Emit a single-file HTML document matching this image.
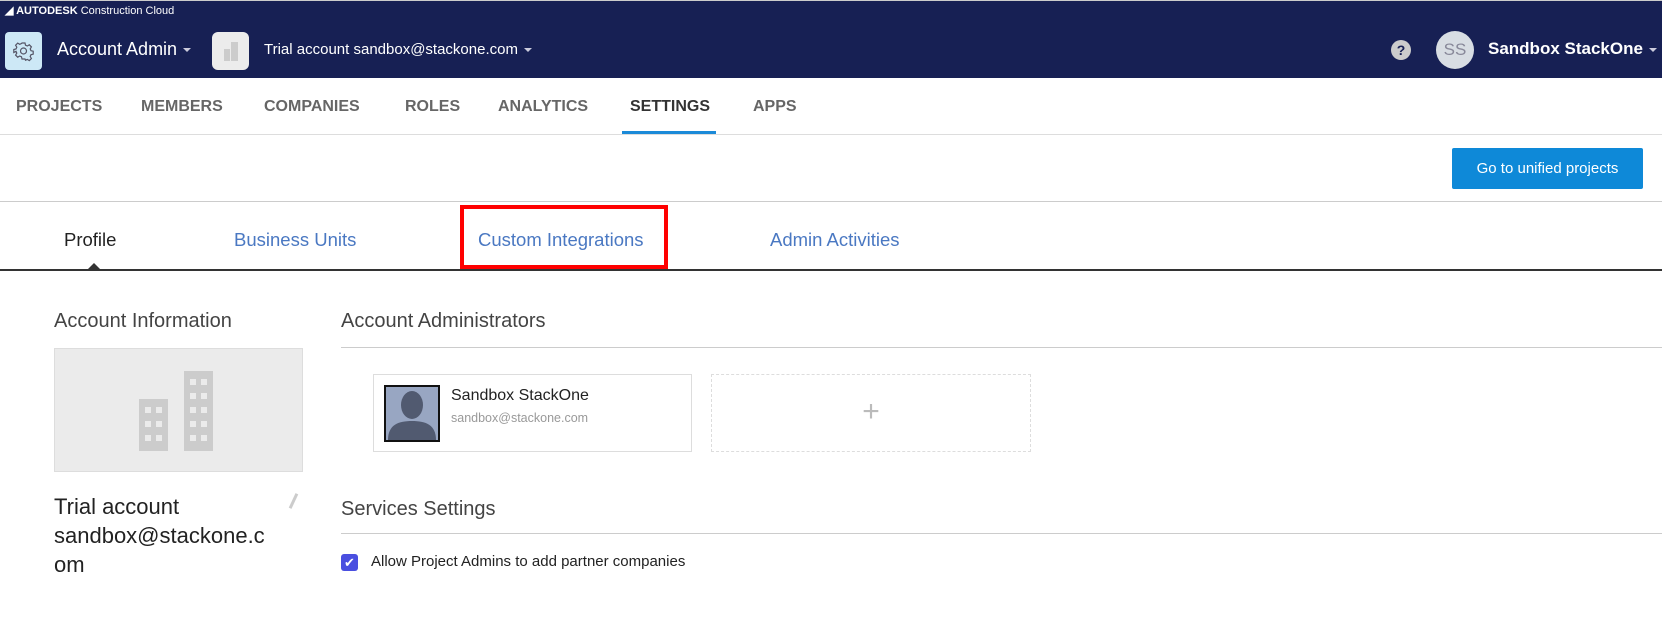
<!DOCTYPE html>
<html><head><meta charset="utf-8"><style>
*{margin:0;padding:0;box-sizing:border-box}
body{width:1662px;height:638px;background:#fff;font-family:"Liberation Sans",sans-serif;position:relative;overflow:hidden;color:#333}
.a{position:absolute;white-space:nowrap}
.nav{color:#555;font-size:16px;top:98px;letter-spacing:0;font-weight:bold;color:#666}
.tab{font-size:18.5px;top:229px;color:#4a78c2}
.caret{display:inline-block;width:0;height:0;border-left:4px solid transparent;border-right:4px solid transparent;border-top:4px solid #ccd;vertical-align:middle;margin-left:6px}
</style></head><body>
<div class="a" style="left:0;top:0;width:1662px;height:78px;background:#172054;border-top:1px solid #ccc"></div>
<div class="a" style="left:5px;top:4px;color:#fff;font-size:11px"><b>◢ AUTODESK</b> Construction Cloud</div>
<div class="a" style="left:5px;top:32px;width:37px;height:38px;background:#cde8f6;border-radius:4px">
<svg width="37" height="38" viewBox="0 0 37 38"><g fill="none" stroke="#556" stroke-width="1.2"><circle cx="18.5" cy="19" r="3"/><path d="M17 11h3l.5 2.2 1.8.8 2-1.2 2.1 2.1-1.2 2 .8 1.8 2.2.5v3l-2.2.5-.8 1.8 1.2 2-2.1 2.1-2-1.2-1.8.8L20 27h-3l-.5-2.2-1.8-.8-2 1.2-2.1-2.1 1.2-2-.8-1.8L8.8 20.5v-3l2.2-.5.8-1.8-1.2-2 2.1-2.1 2 1.2 1.8-.8z"/></g></svg></div>
<div class="a" style="left:57px;top:39px;color:#fff;font-size:18px">Account Admin<span class="caret"></span></div>
<div class="a" style="left:212px;top:32px;width:37px;height:38px;background:#ececec;border-radius:6px">
<svg width="37" height="38" viewBox="0 0 37 38"><rect x="12" y="17" width="6" height="12" fill="#ccc"/><rect x="19" y="10" width="7" height="19" fill="#ccc"/></svg></div>
<div class="a" style="left:264px;top:41px;color:#fff;font-size:15px">Trial account sandbox@stackone.com<span class="caret"></span></div>
<div class="a" style="left:1391px;top:40px;width:20px;height:20px;border-radius:50%;background:#ccc;color:#172054;font-weight:bold;font-size:14px;text-align:center;line-height:20px">?</div>
<div class="a" style="left:1436px;top:31px;width:38px;height:38px;border-radius:50%;background:#d8dde3;color:#889;font-size:17px;text-align:center;line-height:38px">SS</div>
<div class="a" style="left:1488px;top:39px;color:#fff;font-size:17px;font-weight:bold">Sandbox StackOne<span class="caret"></span></div>

<div class="a nav" style="left:16px">PROJECTS</div>
<div class="a nav" style="left:141px">MEMBERS</div>
<div class="a nav" style="left:264px">COMPANIES</div>
<div class="a nav" style="left:405px">ROLES</div>
<div class="a nav" style="left:498px">ANALYTICS</div>
<div class="a nav" style="left:630px;color:#333">SETTINGS</div>
<div class="a nav" style="left:753px">APPS</div>
<div class="a" style="left:622px;top:131px;width:94px;height:3px;background:#1b8ad8"></div>
<div class="a" style="left:0;top:134px;width:1662px;height:1px;background:#ddd"></div>

<div class="a" style="left:1452px;top:148px;width:191px;height:41px;background:#0e89d8;border-radius:2px;color:#fff;font-size:15px;text-align:center;line-height:41px">Go to unified projects</div>
<div class="a" style="left:0;top:201px;width:1662px;height:1px;background:#ccc"></div>

<div class="a tab" style="left:64px;color:#222">Profile</div>
<div class="a tab" style="left:234px">Business Units</div>
<div class="a tab" style="left:478px">Custom Integrations</div>
<div class="a tab" style="left:770px">Admin Activities</div>
<div class="a" style="left:460px;top:205px;width:208px;height:64px;border:4px solid #f00"></div>
<div class="a" style="left:0;top:269px;width:1662px;height:2px;background:#333"></div>
<div class="a" style="left:88px;top:263px;width:0;height:0;border-left:6px solid transparent;border-right:6px solid transparent;border-bottom:6px solid #333"></div>

<div class="a" style="left:54px;top:310px;font-size:20px;color:#444">Account Information</div>
<div class="a" style="left:54px;top:348px;width:249px;height:124px;background:#ebebeb;border:1px solid #ddd">
<svg width="249" height="124" viewBox="0 0 249 124"><rect x="84" y="50" width="29" height="52" fill="#ccc"/><rect x="129" y="22" width="29" height="80" fill="#ccc"/>
<g fill="#ebebeb"><rect x="90" y="58" width="6" height="6"/><rect x="101" y="58" width="6" height="6"/><rect x="90" y="72" width="6" height="6"/><rect x="101" y="72" width="6" height="6"/><rect x="90" y="86" width="6" height="6"/><rect x="101" y="86" width="6" height="6"/>
<rect x="135" y="30" width="6" height="6"/><rect x="146" y="30" width="6" height="6"/><rect x="135" y="44" width="6" height="6"/><rect x="146" y="44" width="6" height="6"/><rect x="135" y="58" width="6" height="6"/><rect x="146" y="58" width="6" height="6"/><rect x="135" y="72" width="6" height="6"/><rect x="146" y="72" width="6" height="6"/><rect x="135" y="86" width="6" height="6"/><rect x="146" y="86" width="6" height="6"/></g></svg></div>
<div class="a" style="left:54px;top:492px;font-size:22px;line-height:29px;color:#222">Trial account<br>sandbox@stackone.c<br>om</div>
<div class="a" style="left:292px;top:493px;width:3px;height:16px;background:#ccc;transform:rotate(25deg)"></div>

<div class="a" style="left:341px;top:310px;font-size:20px;color:#444">Account Administrators</div>
<div class="a" style="left:341px;top:347px;width:1321px;height:1px;background:#ccc"></div>
<div class="a" style="left:373px;top:374px;width:319px;height:78px;border:1px solid #ddd"></div>
<div class="a" style="left:384px;top:385px;width:56px;height:57px;border:2px solid #111;background:#98a6c2;overflow:hidden">
<svg width="52" height="53" viewBox="0 0 52 53"><ellipse cx="26" cy="18" rx="11" ry="14" fill="#515a70"/><path d="M2 53 C2 38 12 34 26 34 C40 34 50 38 50 53Z" fill="#515a70"/></svg></div>
<div class="a" style="left:451px;top:387px;font-size:16px;color:#222">Sandbox StackOne</div>
<div class="a" style="left:451px;top:411px;font-size:12.5px;color:#999">sandbox@stackone.com</div>
<div class="a" style="left:711px;top:374px;width:320px;height:78px;border:1px dashed #ddd;color:#bbb;font-size:30px;text-align:center;line-height:74px;font-weight:300">+</div>

<div class="a" style="left:341px;top:498px;font-size:20px;color:#444">Services Settings</div>
<div class="a" style="left:341px;top:533px;width:1321px;height:1px;background:#ccc"></div>
<div class="a" style="left:341px;top:554px;width:17px;height:17px;background:#4a4fe0;border-radius:3px;color:#fff;font-size:13px;text-align:center;line-height:17px">✔</div>
<div class="a" style="left:371px;top:553px;font-size:15px;color:#222">Allow Project Admins to add partner companies</div>
</body></html>
